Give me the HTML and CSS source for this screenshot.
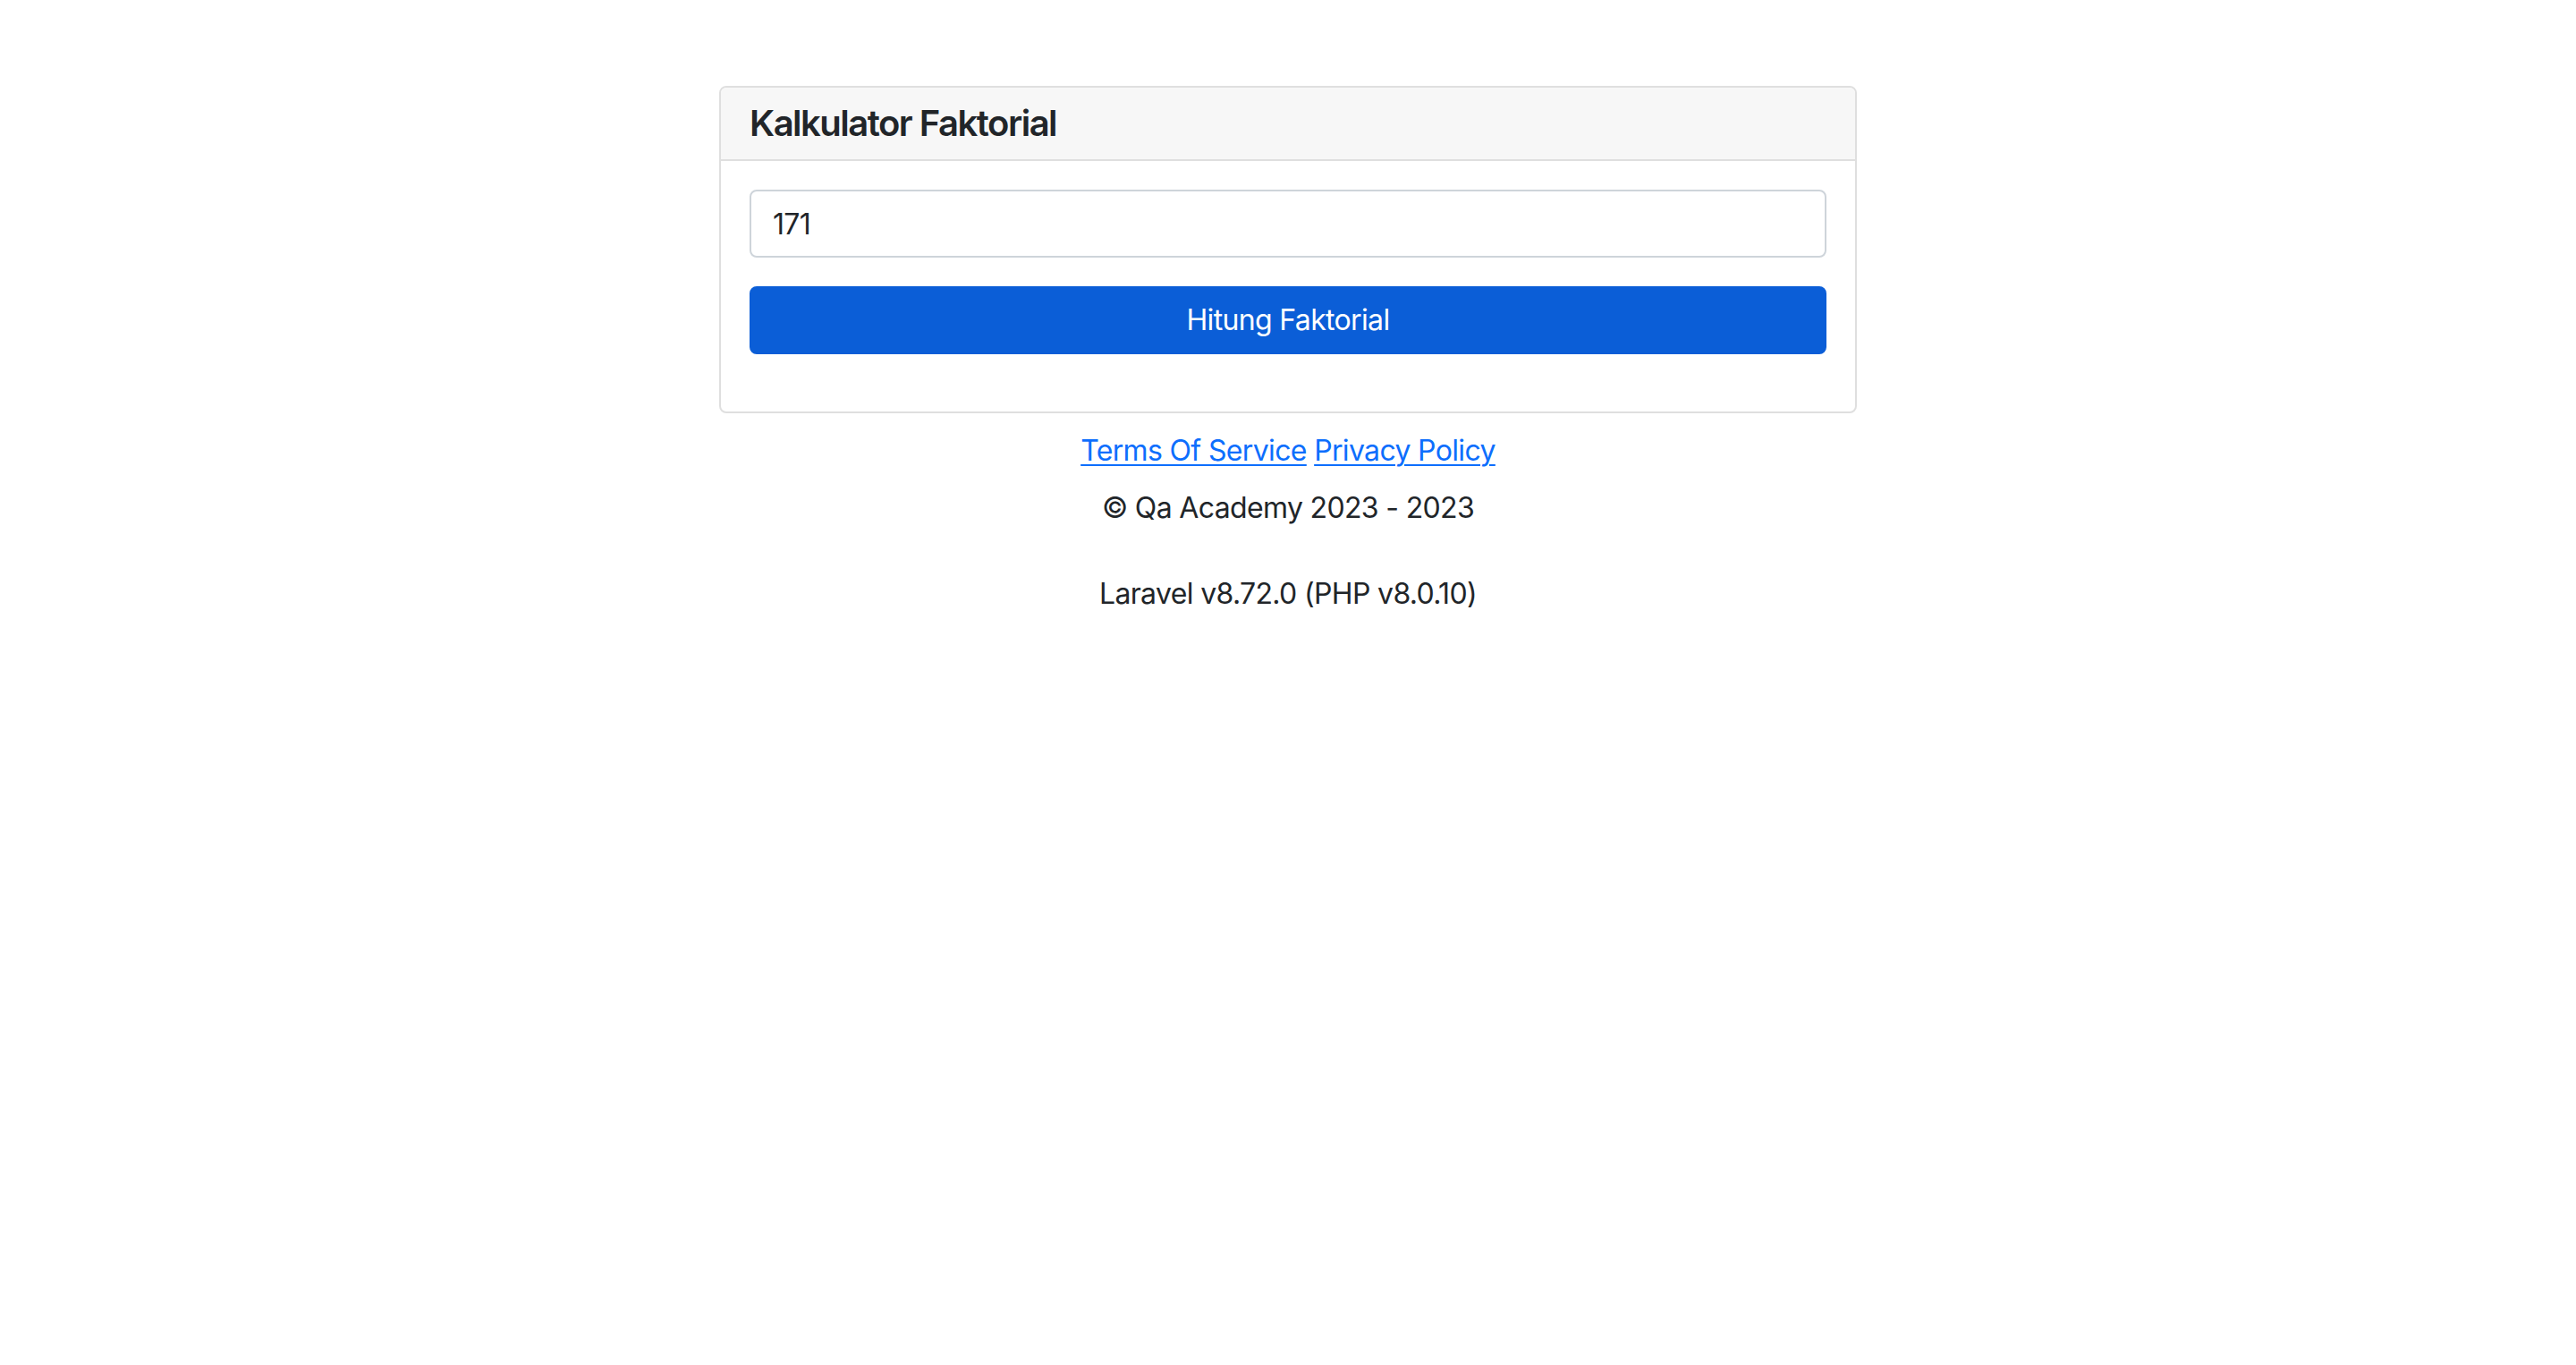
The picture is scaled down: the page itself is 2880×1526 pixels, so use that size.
FILE: index.html
```html
<!DOCTYPE html>
<html lang="id">
<head>
<meta charset="utf-8">
<title>Kalkulator Faktorial</title>
<link rel="stylesheet" href="styles.css">
</head>
<body>
<main class="container">
  <div class="card">
    <div class="card-header">
      <h5 class="card-title">Kalkulator Faktorial</h5>
    </div>
    <div class="card-body">
      <input class="form-control" type="text" value="171">
      <button class="btn-primary" type="button">Hitung Faktorial</button>
    </div>
  </div>
  <footer class="footer">
    <div class="links"><a href="#">Terms Of Service</a> <a href="#">Privacy Policy</a></div>
    <p class="copy">© Qa Academy 2023 - 2023</p>
    <p class="version">Laravel v8.72.0 (PHP v8.0.10)</p>
  </footer>
</main>
</body>
</html>
```
FILE: styles.css
```css
* { box-sizing: border-box; }
html, body { margin: 0; padding: 0; background: #fff; }
body {
  font-family: Inter, "Noto Sans", "Liberation Sans", sans-serif;
  font-size: 32px;
  line-height: 48px;
  letter-spacing: -0.65px;
  color: #212529;
}
.container {
  width: 1272px;
  margin: 96px auto 0;
}
.card {
  border: 2px solid #dfdfdf;
  border-radius: 8px;
  overflow: hidden;
}
.card-header {
  background: #f7f7f7;
  border-bottom: 2px solid #dfdfdf;
  padding: 16px 32px;
}
.card-title {
  margin: 0;
  font-size: 40px;
  line-height: 48px;
  font-weight: 600;
  letter-spacing: -1.5px;
}
.card-body {
  padding: 32px;
  display: flex;
  flex-direction: column;
  gap: 32px;
}
.form-control {
  display: block;
  width: 100%;
  height: 76px;
  padding: 12px 24px;
  font: inherit;
  letter-spacing: inherit;
  color: #212529;
  border: 2px solid #ced4da;
  border-radius: 8px;
  background: #fff;
  margin: 0;
}
.btn-primary {
  display: block;
  width: 100%;
  height: 76px;
  margin: 0 0 32px;
  font: inherit;
  letter-spacing: inherit;
  color: #fff;
  background: #0b5ed7;
  border: 2px solid #0b5ed7;
  border-radius: 8px;
  padding: 12px 24px;
}
.footer {
  text-align: center;
  padding-top: 18px;
}
.links a {
  color: #0d6efd;
  text-decoration: underline;
  text-underline-offset: 4px;
  text-decoration-thickness: 2px;
}
.copy { margin: 16px 0 0; }
.version { margin: 48px 0 0; }
```
